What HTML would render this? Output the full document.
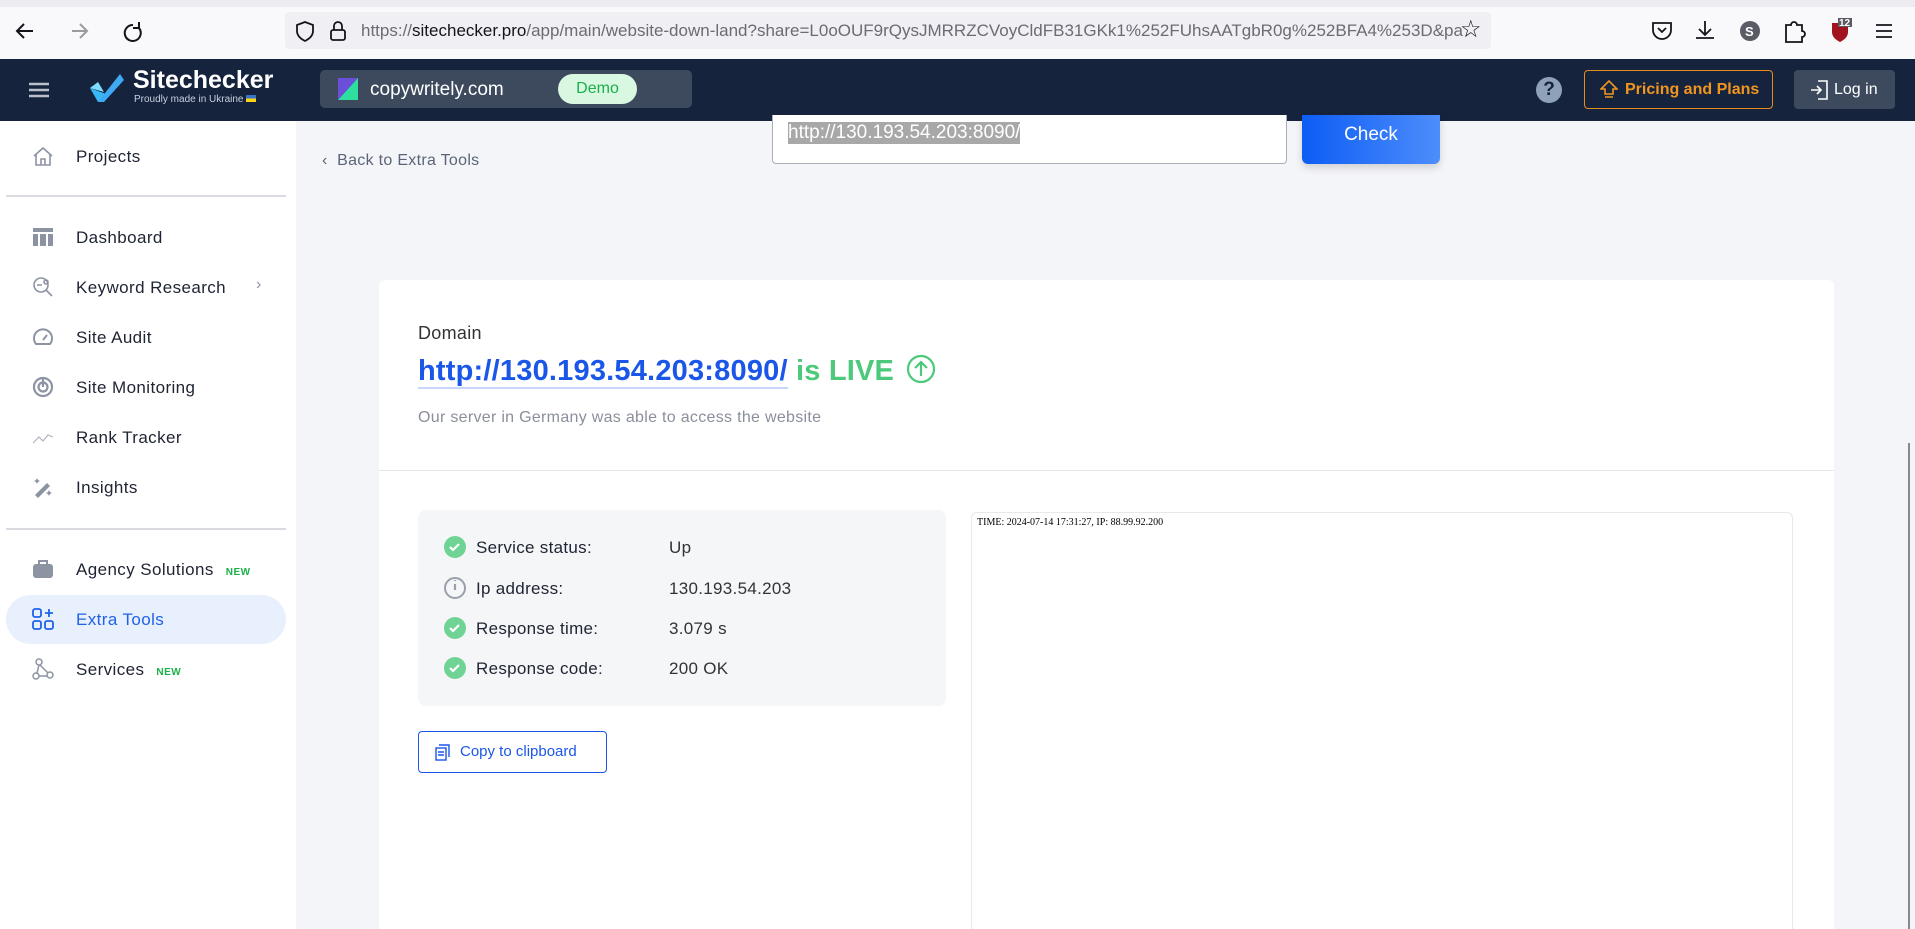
<!DOCTYPE html>
<html><head><meta charset="utf-8"><style>
*{box-sizing:border-box;margin:0;padding:0}
html,body{width:1915px;height:929px;overflow:hidden}
body{background:#f4f5f8;font-family:"Liberation Sans",sans-serif;position:relative;color:#1f2433}
.abs{position:absolute}
.tb{left:0;top:0;width:1915px;height:59px;background:#f9f9fb;border-top:7px solid #ececf0}
.url{left:285px;top:12px;width:1206px;height:37px;background:#f0f0f4;border-radius:4px;font-size:17px;color:#6b6b75;line-height:37px;padding-left:76px;white-space:nowrap;overflow:hidden}
.url b{font-weight:normal;color:#15141a}
.nav{left:0;top:59px;width:1915px;height:62px;background:#15233d}
.side{left:0;top:121px;width:296px;height:808px;background:#fff}
.item{position:absolute;left:76px;font-size:17px;color:#1f2433;transform:translateY(-50%);letter-spacing:.4px}
.ic{position:absolute;left:32px;width:22px;height:22px;transform:translateY(-50%)}
.hr{position:absolute;left:6px;width:280px;height:2px;background:#d9dbe0}
.new{font-size:10px;font-weight:bold;color:#1bb04a;margin-left:12px;letter-spacing:.5px}
.card{left:379px;top:280px;width:1455px;height:649px;background:#fff;border-radius:6px 6px 0 0}
.row{position:absolute;left:476px;font-size:17px;transform:translateY(-50%);letter-spacing:.3px}
.val{position:absolute;left:669px;font-size:17px;transform:translateY(-50%);color:#333;letter-spacing:.3px}
.chk{position:absolute;left:444px;width:22px;height:22px;border-radius:50%;background:#6fd394;transform:translateY(-50%)}
</style></head><body>
<div class="abs tb"></div>
<svg class="abs" style="left:14px;top:19px" width="140" height="24" viewBox="0 0 140 24" fill="none" stroke="#15141a" stroke-width="2"><path d="M19 12H4M10 5l-7 7 7 7"/><path d="M58 12h15M66 5l7 7-7 7" stroke="#9a9aa0"/><path d="M119 6a8 8 0 1 0 6 3M125 3v6h-6"/></svg>
<div class="abs url">https://<b>sitechecker.pro</b>/app/main/website-down-land?share=L0oOUF9rQysJMRRZCVoyCldFB31GKk1%252FUhsAATgbR0g%252BFA4%253D&amp;pa</div>
<svg class="abs" style="left:295px;top:20px" width="60" height="22" fill="none" stroke="#15141a" stroke-width="1.8"><path d="M10 2l8 3v6c0 5-4 8-8 10-4-2-8-5-8-10V5z"/><rect x="36" y="10" width="14" height="10" rx="2"/><path d="M39 10V6a4 4 0 0 1 8 0v4"/></svg>
<div class="abs" style="left:1460px;top:15px;font-size:24px;color:#15141a">☆</div>
<svg class="abs" style="left:1650px;top:18px" width="250" height="26" fill="none" stroke="#15141a" stroke-width="1.8"><path d="M3 5h18v7a9 9 0 0 1-18 0z M8 10l4 4 4-4"/><path d="M55 3v14M49 11l6 6 6-6M46 20h18"/><circle cx="100" cy="13" r="10" fill="#5b5b66" stroke="none"/><text x="95" y="18" font-size="13" fill="#fff" stroke="none" font-family="Liberation Sans" font-weight="bold">S</text><path d="M136 7h5a3 3 0 0 1 6 0h5v6a3 3 0 0 1 0 6v5h-16z"/><path d="M182 5h16v9c0 5-4 8-8 10-4-2-8-5-8-10z" fill="#a1141d" stroke="none"/><rect x="188" y="-2" width="14" height="11" fill="#5b5b66" stroke="none"/><text x="189" y="8" font-size="10" fill="#fff" stroke="none" font-family="Liberation Sans" font-weight="bold">12</text><path d="M226 7h16M226 13h16M226 19h16"/></svg>

<div class="abs nav"></div>
<svg class="abs" style="left:29px;top:82px" width="20" height="16"><path d="M0 2h20M0 8h20M0 14h20" stroke="#b9c0cc" stroke-width="2.5"/></svg>
<svg class="abs" style="left:86px;top:70px" width="40" height="36"><path d="M4 18l8 14 8-8z" fill="#39b7f5"/><path d="M12 32L34 4l4 6-20 22z" fill="#3fa9f5"/><path d="M4 18l8-6 6 10z" fill="#7fdcff"/></svg>
<div class="abs" style="left:133px;top:66px;font-size:25px;font-weight:bold;color:#fff">Sitechecker</div>
<div class="abs" style="left:134px;top:94px;font-size:10px;color:#c7cfdc">Proudly made in Ukraine <span style="display:inline-block;width:10px;height:7px;background:linear-gradient(#3a75c4 50%,#f9d616 50%)"></span></div>
<div class="abs" style="left:320px;top:70px;width:372px;height:38px;background:#3d4a5e;border-radius:5px"></div>
<svg class="abs" style="left:338px;top:78px" width="20" height="22"><path d="M0 0h20L0 22z" fill="#6b4fd8"/><path d="M20 0v22H0z" fill="#2ee0a0"/></svg>
<div class="abs" style="left:370px;top:79px;font-size:19px;color:#fff">copywritely.com</div>
<div class="abs" style="left:558px;top:74px;width:79px;height:30px;border-radius:15px;background:#d8f8e2;color:#1fae4c;font-size:16px;text-align:center;line-height:30px">Demo</div>
<div class="abs" style="left:1536px;top:77px;width:26px;height:26px;border-radius:50%;background:#8fa1b9;color:#15233d;font-weight:bold;text-align:center;line-height:26px;font-size:19px">?</div>
<div class="abs" style="left:1584px;top:70px;width:189px;height:39px;border:1px solid #e98b1c;border-radius:4px;color:#f0951f;font-size:16px;font-weight:bold;line-height:37px;padding-left:40px">Pricing and Plans</div>
<svg class="abs" style="left:1600px;top:80px" width="18" height="20" fill="none" stroke="#f0951f" stroke-width="1.6"><path d="M9 1L1 9h4v5h8V9h4z M5 17h8"/></svg>
<div class="abs" style="left:1794px;top:70px;width:101px;height:39px;background:#3d4a5e;border-radius:4px;color:#fff;font-size:16px;line-height:39px;padding-left:40px">Log in</div>
<svg class="abs" style="left:1810px;top:80px" width="18" height="20" fill="none" stroke="#fff" stroke-width="1.6"><path d="M8 1h9v18H8M1 10h10M7 6l4 4-4 4"/></svg>

<div class="abs side"></div>
<svg class="ic" style="top:156px" viewBox="0 0 22 22" fill="none" stroke="#8c93a3" stroke-width="1.6"><path d="M2 11L11 3l9 8M4 9v11h14V9M9 20v-6h4v6"/></svg>
<div class="item" style="top:157px">Projects</div>
<div class="hr" style="top:195px"></div>
<svg class="ic" style="top:237px" viewBox="0 0 22 22" fill="#8c93a3"><rect x="1" y="2" width="20" height="4"/><rect x="1" y="8" width="5" height="12"/><rect x="8" y="8" width="6" height="12"/><rect x="16" y="8" width="5" height="12"/></svg>
<div class="item" style="top:238px">Dashboard</div>
<svg class="ic" style="top:287px" viewBox="0 0 22 22" fill="none" stroke="#8c93a3" stroke-width="1.6"><circle cx="9" cy="9" r="7"/><path d="M14 14l6 6M5 9h5"/><circle cx="14" cy="6" r="2"/></svg>
<div class="item" style="top:288px">Keyword Research</div>
<div class="abs" style="left:256px;top:276px;color:#8c93a3;font-size:16px">›</div>
<svg class="ic" style="top:337px" viewBox="0 0 22 22" fill="none" stroke="#8c93a3" stroke-width="2"><path d="M4 18a9 9 0 1 1 14 0z"/><path d="M11 14l4-5"/></svg>
<div class="item" style="top:338px">Site Audit</div>
<svg class="ic" style="top:387px" viewBox="0 0 22 22" fill="none" stroke="#8c93a3" stroke-width="2.2"><circle cx="11" cy="11" r="9"/><circle cx="11" cy="11" r="4.5"/><path d="M11 11V2"/></svg>
<div class="item" style="top:388px">Site Monitoring</div>
<svg class="ic" style="top:437px" viewBox="0 0 22 22" fill="none" stroke="#b0b5c0" stroke-width="1.2"><path d="M1 17l6-6 4 4 5-6 5 2"/></svg>
<div class="item" style="top:438px">Rank Tracker</div>
<svg class="ic" style="top:487px" viewBox="0 0 22 22" fill="#8c93a3"><path d="M3 19l12-12 3 3-12 12z"/><path d="M5 2l1 2 2 1-2 1-1 2-1-2-2-1 2-1zM17 14l1 2 2 1-2 1-1 2-1-2-2-1 2-1z"/></svg>
<div class="item" style="top:488px">Insights</div>
<div class="hr" style="top:528px"></div>
<svg class="ic" style="top:569px" viewBox="0 0 22 22" fill="#8c93a3"><rect x="1" y="6" width="20" height="14" rx="3"/><path d="M7 6V3h8v3" fill="none" stroke="#8c93a3" stroke-width="2"/></svg>
<div class="item" style="top:570px">Agency Solutions<span class="new">NEW</span></div>
<div class="abs" style="left:6px;top:595px;width:280px;height:49px;border-radius:25px;background:#e8f0fd"></div>
<svg class="ic" style="top:619px" viewBox="0 0 22 22" fill="none" stroke="#1f62e8" stroke-width="1.8"><rect x="1" y="1" width="8" height="8" rx="2"/><rect x="1" y="13" width="8" height="8" rx="2"/><rect x="13" y="13" width="8" height="8" rx="2"/><path d="M17 1v8M13 5h8"/></svg>
<div class="item" style="top:620px;color:#1f62e8">Extra Tools</div>
<svg class="ic" style="top:669px" viewBox="0 0 22 22" fill="none" stroke="#8c93a3" stroke-width="1.5"><circle cx="7" cy="4" r="3"/><circle cx="4" cy="18" r="3"/><circle cx="18" cy="17" r="3"/><path d="M7 7l-2 8M8 7l8 8M7 18h8"/></svg>
<div class="item" style="top:670px">Services<span class="new">NEW</span></div>

<div class="abs" style="left:322px;top:152px;font-size:16px;color:#5b6478;letter-spacing:.3px">‹&nbsp;&nbsp;Back to Extra Tools</div>
<div class="abs" style="left:772px;top:115px;width:515px;height:49px;background:#fff;border:1px solid #a9adb5;border-top:none;border-radius:0 0 4px 4px"></div>
<div class="abs" style="left:788px;top:122px;font-size:19px;color:#fff;background:#a8a8a8;line-height:22px">http://130.193.54.203:8090/</div>
<div class="abs" style="left:1302px;top:115px;width:138px;height:49px;border-radius:0 0 6px 6px;background:linear-gradient(90deg,#0d5df5,#4d8dfb);color:#fff;font-size:19px;text-align:center;line-height:40px;box-shadow:0 4px 8px rgba(0,0,0,.15)">Check</div>

<div class="abs card"></div>
<div class="abs" style="left:418px;top:323px;font-size:18px;color:#333;letter-spacing:.3px">Domain</div>
<div class="abs" style="left:418px;top:354px;font-size:29px;font-weight:bold;white-space:nowrap;letter-spacing:.2px"><span style="color:#1a56e8;border-bottom:2px solid #c9d6fb">http://130.193.54.203:8090/</span> <span style="color:#4cc97a">is LIVE</span> <svg style="vertical-align:-4px;margin-left:4px" width="30" height="30" fill="none" stroke="#4cc97a" stroke-width="2.2"><circle cx="15" cy="15" r="13"/><path d="M15 22V8M9 14l6-6 6 6"/></svg></div>
<div class="abs" style="left:418px;top:409px;font-size:16px;color:#8a8f9b;letter-spacing:.3px">Our server in Germany was able to access the website</div>
<div class="abs" style="left:379px;top:470px;width:1455px;height:1px;background:#e6e8ec"></div>
<div class="abs" style="left:418px;top:510px;width:528px;height:196px;background:#f5f6f8;border-radius:8px"></div>
<div class="chk" style="top:547px"></div><div class="row" style="top:548px">Service status:</div><div class="val" style="top:548px">Up</div>
<div class="chk" style="top:588px;background:none;border:2px solid #9aa0ab"></div><div class="row" style="top:589px">Ip address:</div><div class="val" style="top:589px">130.193.54.203</div>
<div class="chk" style="top:628px"></div><div class="row" style="top:629px">Response time:</div><div class="val" style="top:629px">3.079 s</div>
<div class="chk" style="top:668px"></div><div class="row" style="top:669px">Response code:</div><div class="val" style="top:669px">200 OK</div>
<svg class="abs" style="left:448px;top:538px" width="14" height="140" fill="none" stroke="#fff" stroke-width="2.2"><path d="M2 9l3 3 6-6M2 90l3 3 6-6M2 130l3 3 6-6"/><path d="M7 46v6M7 42v1" stroke="#9aa0ab"/></svg>
<div class="abs" style="left:418px;top:731px;width:189px;height:42px;border:1px solid #1a56e8;border-radius:4px;color:#1a56e8;font-size:15px;line-height:40px;padding-left:41px">Copy to clipboard</div>
<svg class="abs" style="left:435px;top:744px" width="16" height="17" fill="none" stroke="#1a56e8" stroke-width="1.4"><rect x="1" y="4" width="10" height="12"/><path d="M4 1h10v12M3 8h6M3 11h6"/></svg>
<div class="abs" style="left:971px;top:512px;width:822px;height:417px;border:1px solid #e6e8ec;border-bottom:none;border-radius:6px 6px 0 0;background:#fff"></div>
<div class="abs" style="left:977px;top:517px;font-family:'Liberation Serif',serif;font-size:10px;color:#000">TIME: 2024-07-14 17:31:27, IP: 88.99.92.200</div>
<div class="abs" style="left:1908px;top:443px;width:2px;height:486px;background:#8a8a8a"></div>
</body></html>
